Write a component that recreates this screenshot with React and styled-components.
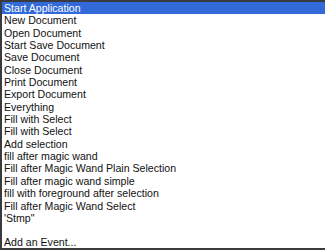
import React from 'react';
import styled, { createGlobalStyle } from 'styled-components';

const GlobalStyle = createGlobalStyle`
  html, body {
    margin: 0;
    padding: 0;
    background: #ffffff;
  }
`;

const Panel = styled.div`
  width: 325px;
  height: 250px;
  box-sizing: border-box;
  border-left: 2px solid #3a3b3f;
  border-top: 2px solid #3a3b3f;
  border-bottom: 2px solid #3a3b3f;
  background: #ffffff;
  display: flex;
  flex-direction: column;
  font-family: 'Liberation Sans', Arial, sans-serif;
  font-size: 10.6px;
  color: #111111;
  overflow: hidden;
`;

const List = styled.div`
  display: flex;
  flex-direction: column;
`;

const Item = styled.div`
  height: 12.35px;
  line-height: 12.35px;
  padding-left: 2px;
  white-space: nowrap;
  background: ${(p) => (p.selected ? '#326ad9' : 'transparent')};
  color: ${(p) => (p.selected ? '#ffffff' : '#111111')};
`;

const Separator = styled.div`
  height: 2px;
  background: #dcdcdc;
  margin: 6.7px 0 5px;
`;

const items = [
  'Start Application',
  'New Document',
  'Open Document',
  'Start Save Document',
  'Save Document',
  'Close Document',
  'Print Document',
  'Export Document',
  'Everything',
  'Fill with Select',
  'Fill with Select',
  'Add selection',
  'fill after magic wand',
  'Fill after Magic Wand Plain Selection',
  'Fill after magic wand simple',
  'fill with foreground after selection',
  'Fill after Magic Wand Select',
  '\'Stmp"',
];

const App = () => {
  return (
    <>
      <GlobalStyle />
      <Panel>
        <List>
          {items.map((label, i) => (
            <Item key={i} selected={i === 0}>
              {label}
            </Item>
          ))}
        </List>
        <Separator />
        <Item>Add an Event...</Item>
      </Panel>
    </>
  );
};

export default App;
